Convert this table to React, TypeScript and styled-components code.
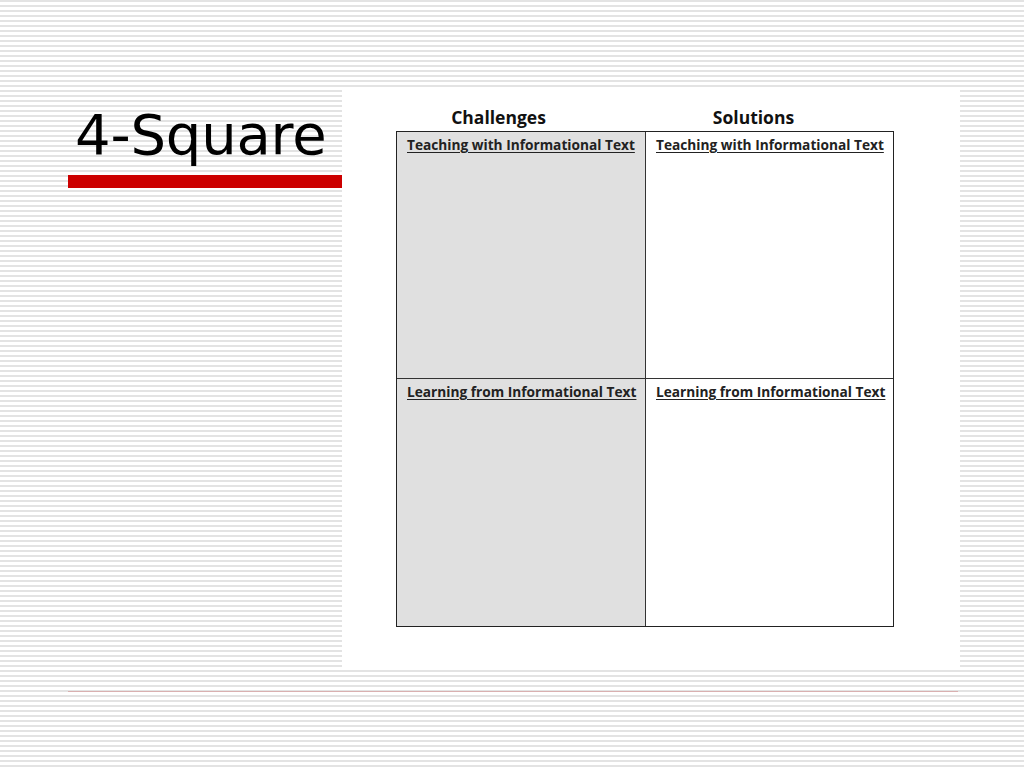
import React from "react";
import styled, { createGlobalStyle } from "styled-components";

const Global = createGlobalStyle`
  html, body { margin: 0; padding: 0; }
  body {
    width: 1024px;
    height: 768px;
    overflow: hidden;
    background-color: #ffffff;
    background-image: repeating-linear-gradient(
      to bottom,
      #e3e3e3 0px,
      #e3e3e3 1.6px,
      #ffffff 1.6px,
      #ffffff 5px
    );
  }
`;

const Page = styled.div`
  width: 1024px;
  height: 768px;
  box-sizing: border-box;
  padding-top: 87px;
  display: flex;
  flex-direction: column;
`;

const Row = styled.div`
  display: flex;
`;

const LeftCol = styled.div`
  width: 342px;
  display: flex;
  flex-direction: column;
`;

const Title = styled.h1`
  margin: 14px 0 0 75px;
  font-family: "DejaVu Sans", Verdana, sans-serif;
  font-weight: normal;
  font-size: 56px;
  line-height: 67px;
  color: #000;
  letter-spacing: -0.2px;
`;

const RedBar = styled.div`
  margin: 7px 0 0 68px;
  height: 13px;
  background: #cc0000;
`;

const Panel = styled.div`
  width: 618px;
  height: 581px;
  background: #ffffff;
  box-sizing: border-box;
  padding: 19px 0 0 54px;
  display: flex;
  flex-direction: column;
`;

const HeaderRow = styled.div`
  width: 498px;
  height: 25px;
  display: grid;
  grid-template-columns: 1fr 1fr;
`;

const Header = styled.div<{ $shift: number }>`
  font-family: "Open Sans", Lato, sans-serif;
  font-weight: bold;
  font-size: 17.5px;
  line-height: 22px;
  color: #111;
  text-align: center;
  padding-right: ${(p) => p.$shift}px;
`;

const Table = styled.div`
  width: 498px;
  height: 496px;
  box-sizing: border-box;
  border: 1px solid #222;
  display: grid;
  grid-template-columns: 248px 248px;
  grid-template-rows: 246px 248px;
`;

const Cell = styled.div<{ $shaded?: boolean; $right?: boolean; $bottom?: boolean }>`
  background: ${(p) => (p.$shaded ? "#e0e0e0" : "#ffffff")};
  border-left: ${(p) => (p.$right ? "1px solid #333" : "none")};
  border-top: ${(p) => (p.$bottom ? "1px solid #333" : "none")};
  padding: 4px 0 0 10px;
`;

const Label = styled.span`
  font-family: "Open Sans", Lato, sans-serif;
  font-weight: bold;
  font-size: 13.7px;
  line-height: 16px;
  color: #222;
  text-decoration: underline;
  text-underline-offset: 2px;
  white-space: nowrap;
`;

const BottomLine = styled.div`
  margin: 23px 0 0 68px;
  width: 890px;
  height: 1px;
  background: #d9b0b0;
`;

export default function App() {
  return (
    <>
      <Global />
      <Page>
        <Row>
          <LeftCol>
            <Title>4-Square</Title>
            <RedBar />
          </LeftCol>
          <Panel>
            <HeaderRow>
              <Header $shift={44}>Challenges</Header>
              <Header $shift={32}>Solutions</Header>
            </HeaderRow>
            <Table>
              <Cell $shaded>
                <Label>Teaching with Informational Text</Label>
              </Cell>
              <Cell $right>
                <Label>Teaching with Informational Text</Label>
              </Cell>
              <Cell $shaded $bottom>
                <Label>Learning from Informational Text</Label>
              </Cell>
              <Cell $right $bottom>
                <Label>Learning from Informational Text</Label>
              </Cell>
            </Table>
          </Panel>
        </Row>
        <BottomLine />
      </Page>
    </>
  );
}
